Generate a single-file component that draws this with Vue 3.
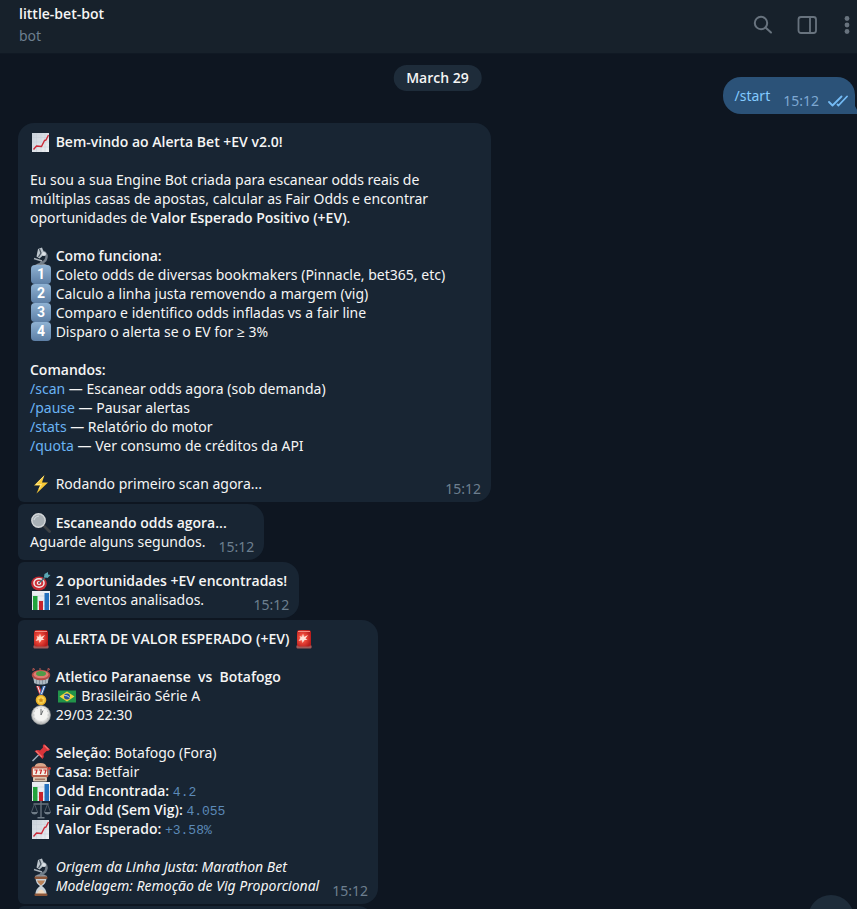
<script setup>
const time = "15:12";

// every line is a list of segments: [kind, value]
const messages = [
    {
        id: 1,
        first: true,
        lines: [
            [["emoji", "chart"], ["bold", " Bem-vindo ao Alerta Bet +EV v2.0!"]],
            [],
            [
                ["text", "Eu sou a sua Engine Bot criada para escanear odds reais de "],
                ["text", "múltiplas casas de apostas, calcular as Fair Odds e encontrar "],
                ["text", "oportunidades de "],
                ["bold", "Valor Esperado Positivo (+EV)"],
                ["text", "."],
            ],
            [],
            [["emoji", "microscope"], ["bold", " Como funciona:"]],
            [["key", "1"], ["text", " Coleto odds de diversas bookmakers (Pinnacle, bet365, etc)"]],
            [["key", "2"], ["text", " Calculo a linha justa removendo a margem (vig)"]],
            [["key", "3"], ["text", " Comparo e identifico odds infladas vs a fair line"]],
            [["key", "4"], ["text", " Disparo o alerta se o EV for ≥ 3%"]],
            [],
            [["bold", "Comandos:"]],
            [["link", "/scan"], ["text", " — Escanear odds agora (sob demanda)"]],
            [["link", "/pause"], ["text", " — Pausar alertas"]],
            [["link", "/stats"], ["text", " — Relatório do motor"]],
            [["link", "/quota"], ["text", " — Ver consumo de créditos da API"]],
            [],
            [["emoji", "bolt"], ["text", " Rodando primeiro scan agora..."]],
        ],
    },
    {
        id: 2,
        lines: [
            [["emoji", "magnifier"], ["bold", " Escaneando odds agora..."]],
            [["text", "Aguarde alguns segundos."]],
        ],
    },
    {
        id: 3,
        lines: [
            [["emoji", "target"], ["bold", " 2 oportunidades +EV encontradas!"]],
            [["emoji", "bars"], ["text", " 21 eventos analisados."]],
        ],
    },
    {
        id: 4,
        lines: [
            [["emoji", "siren"], ["bold", " ALERTA DE VALOR ESPERADO (+EV) "], ["emoji", "siren"]],
            [],
            [["emoji", "stadium"], ["bold", " Atletico Paranaense  vs  Botafogo"]],
            [["emoji", "medal"], ["text", " "], ["emoji", "brazil"], ["text", " Brasileirão Série A"]],
            [["emoji", "clock"], ["text", " 29/03 22:30"]],
            [],
            [["emoji", "pin"], ["bold", " Seleção:"], ["text", " Botafogo (Fora)"]],
            [["emoji", "slot"], ["bold", " Casa:"], ["text", " Betfair"]],
            [["emoji", "bars"], ["bold", " Odd Encontrada:"], ["text", " "], ["code", "4.2"]],
            [["emoji", "scales"], ["bold", " Fair Odd (Sem Vig):"], ["text", " "], ["code", "4.055"]],
            [["emoji", "chart"], ["bold", " Valor Esperado:"], ["text", " "], ["code", "+3.58%"]],
            [],
            [["emoji", "microscope"], ["italic", " Origem da Linha Justa: Marathon Bet"]],
            [["emoji", "hourglass"], ["italic", " Modelagem: Remoção de Vig Proporcional"]],
        ],
    },
];
</script>

<template>
<div class="chat">
    <svg class="sprites" aria-hidden="true">
        <defs>
            <linearGradient id="paper-fill" x1="0" y1="0" x2="1" y2="1">
                <stop offset="0" stop-color="#c9d1da" />
                <stop offset="1" stop-color="#eef0f3" />
            </linearGradient>
            <radialGradient id="siren-fill" cx="0.4" cy="0.5" r="0.6">
                <stop offset="0" stop-color="#ffb9a8" />
                <stop offset="0.4" stop-color="#ee4a3b" />
                <stop offset="1" stop-color="#b91d1c" />
            </radialGradient>
            <radialGradient id="clock-fill" cx="0.5" cy="0.45" r="0.55">
                <stop offset="0.6" stop-color="#f4f4f2" />
                <stop offset="1" stop-color="#a9abab" />
            </radialGradient>
        </defs>
        <symbol id="chart" viewBox="0 0 22 20">
            <rect x="2" y="1" width="17" height="19" fill="url(#paper-fill)" />
            <path d="M2 5.5h17M2 10h17M2 15h17M6.5 1v19M11 1v19M15 1v19" stroke="#c6ced8" stroke-width="0.5" />
            <path d="M3.5 17.5 L6.5 14 L11.5 14.5 L14.5 8.500 L16 8 L18.5 3" fill="none" stroke="#cb2a38" stroke-width="1.4" stroke-linejoin="round" />
        </symbol>
        <symbol id="microscope" viewBox="0 0 22 20">
            <path d="M5 19 Q11 15 17 19 L17 20 H5Z" fill="#8b949d" />
            <path d="M13 5.5 Q18 8 16 13 Q15 16 10 17.5" fill="none" stroke="#727d88" stroke-width="2.4" />
            <path d="M4 12.5 L12 15" stroke="#a8b1b9" stroke-width="1.5" />
            <path d="M8 3 L12 1.5 L14.5 8 L9.5 12.5 L6.5 10.5Z" fill="#bcc5cc" />
            <path d="M9.5 3 L11 7 L8.5 11" fill="none" stroke="#47535f" stroke-width="1.2" />
            <circle cx="14" cy="8" r="2" fill="#dce2e7" />
        </symbol>
        <symbol id="bolt" viewBox="0 0 22 20">
            <path d="M14.5 1 L4 11.5 L10 11.5 L6.5 19.5 L18 8.5 L12 8.5Z" fill="#f8c936" />
            <path d="M13.5 2.5 L6 10.5 H11.5 L9 15" fill="none" stroke="#ffe98b" stroke-width="0.9" />
        </symbol>
        <symbol id="magnifier" viewBox="0 0 22 20">
            <path d="M13.5 12.5 L19.5 18.5" stroke="#3c4145" stroke-width="2.8" stroke-linecap="round" />
            <circle cx="8.5" cy="7.5" r="6.7" fill="#a9b1b6" stroke="#d4d7d9" stroke-width="1.4" />
            <path d="M4 7 Q5 3.5 9 3" fill="none" stroke="#d0d7db" stroke-width="1.2" />
        </symbol>
        <symbol id="target" viewBox="0 0 22 20">
            <ellipse cx="9" cy="12.5" rx="7.8" ry="7" fill="#c42b33" />
            <ellipse cx="9" cy="12" rx="5.8" ry="5" fill="#f0eded" />
            <ellipse cx="9" cy="12" rx="4.3" ry="3.6" fill="#d02f37" />
            <ellipse cx="9" cy="12" rx="2.3" ry="2" fill="#f6eeee" />
            <circle cx="9" cy="12" r="1" fill="#c42b33" />
            <path d="M9 12 L16 5.5" stroke="#3d6f79" stroke-width="1.5" />
            <path d="M14 6 L14.5 3 L18 1 L18 3.5 L20.5 4 L17.5 7Z" fill="#5aa7b5" />
        </symbol>
        <symbol id="bars" viewBox="0 0 22 20">
            <rect x="2" y="1" width="18" height="19" fill="#e9edf2" />
            <path d="M2 6h18M2 11h18M2 16h18" stroke="#c8d0d9" stroke-width="0.6" />
            <rect x="3" y="6" width="4.5" height="14" fill="#22a33c" />
            <rect x="9" y="11" width="4" height="9" fill="#c8232c" />
            <rect x="14.5" y="3" width="4.5" height="17" fill="#2470bd" />
        </symbol>
        <symbol id="siren" viewBox="0 0 22 20">
            <rect x="3.5" y="16" width="15" height="3.5" rx="1.2" fill="#a35a58" />
            <rect x="4" y="1" width="14" height="16.5" rx="2.5" fill="url(#siren-fill)" />
            <path d="M5 2.5h12" stroke="#f18e81" />
            <path d="M10 4.5 L11 8 L15 6 L12.5 9.5 L14.5 11 L11.5 11 L9.5 14 L9 11 L5.500 12 L7.5 9 L6.500 7 L9 8Z" fill="#ffe2d8" />
        </symbol>
        <symbol id="stadium" viewBox="0 0 22 20">
            <path d="M2.5 9 L4.5 16.5 Q11 19 17.5 16.5 L19.5 9Z" fill="#8795a0" />
            <path d="M5 11v5M8 12v5M11 12v5M14 12v5M17 11v5" stroke="#d3dbe0" />
            <ellipse cx="11" cy="8" rx="9.3" ry="5.3" fill="#b34a45" />
            <ellipse cx="11" cy="7.5" rx="7.5" ry="3.8" fill="#e07c72" />
            <ellipse cx="11" cy="6.5" rx="5" ry="2.6" fill="#4f9b48" />
            <path d="M3 4 V1.5 L5 2.5M18 4 V1.5 L20 2.5M10 3 V1" stroke="#c35a53" fill="none" />
        </symbol>
        <symbol id="medal" viewBox="0 0 22 20">
            <path d="M6 0 H9.5 L13 9 H9.5Z" fill="#d13e46" />
            <path d="M7.5 0 L11 9" stroke="#f2f2f2" />
            <path d="M12.5 0 H16 L12.5 9 H9.5Z" fill="#3868b5" />
            <path d="M14.5 0 L11.5 8" stroke="#f2f2f2" />
            <circle cx="11" cy="14" r="5.3" fill="#e9ae25" />
            <circle cx="11" cy="14" r="3.7" fill="#f9d352" />
            <path d="M11 11.5 L11.8 13.3 L13.7 13.5 L12.3 14.7 L12.7 16.5 L11 15.6 L9.3 16.5 L9.7 14.7 L8.3 13.5 L10.2 13.3Z" fill="#cc8a18" />
        </symbol>
        <symbol id="brazil" viewBox="0 0 22 20">
            <rect x="2" y="4.5" width="18" height="12" fill="#22944a" />
            <path d="M11 5.5 L18.5 10.5 L11 15.5 L3.5 10.5Z" fill="#f1d33d" />
            <circle cx="11" cy="10.5" r="3" fill="#29539a" />
            <path d="M8.3 9.5 Q11 9 13.7 11.5" fill="none" stroke="#e9eef5" stroke-width="0.8" />
        </symbol>
        <symbol id="clock" viewBox="0 0 22 20">
            <circle cx="11" cy="10" r="9.5" fill="url(#clock-fill)" stroke="#9c9f9f" stroke-width="0.6" />
            <path d="M11 2v1.5M11 16.5v1.5M3 10h1.5M17.5 10h1.5M7 3l.6 1M15 3l-.6 1M4 6l1 .6M18 6l-1 .6M4 14l1-.6M18 14l-1-.6" stroke="#a9abab" stroke-width="0.6" />
            <path d="M11 10 V4 M11 10 L13 5.5" stroke="#6b6e70" stroke-width="1" />
        </symbol>
        <symbol id="pin" viewBox="0 0 22 20">
            <path d="M2.5 18 L9 11.5" stroke="#9eafbd" stroke-width="1.4" />
            <path d="M4.5 8 Q8 6.5 10 7.5 L13 4.5 Q12 2.5 14 1 L20 6.5 Q18.5 8.5 16.5 8 L13.5 11 Q14.5 13.5 12.5 16Z" fill="#d8343a" />
            <path d="M6 8 L12 14M14.5 2.5 L18.5 6.5" stroke="#f4736e" stroke-width="1.2" />
        </symbol>
        <symbol id="slot" viewBox="0 0 22 20">
            <path d="M4.5 5 Q5 1 10.5 1 Q16 1 16.5 5Z" fill="#d9a68a" />
            <rect x="1.5" y="4.5" width="17" height="11" rx="2" fill="#b9604c" />
            <rect x="3" y="6.5" width="14" height="6.5" fill="#f3eee5" />
            <path d="M4.3 8 H7 L5.8 12M8.8 8 H11.5 L10.3 12M13.3 8 H16 L14.8 12" fill="none" stroke="#c82c2b" stroke-width="1.2" />
            <rect x="3" y="15" width="14" height="4.5" rx="1" fill="#d8c3ae" />
            <path d="M5 17.2 H15" stroke="#8b5948" />
            <path d="M19 13 V7" stroke="#a9afb5" />
            <circle cx="19.5" cy="6.5" r="1.4" fill="#d73b36" />
        </symbol>
        <symbol id="scales" viewBox="0 0 22 20">
            <path d="M11 1 V17 M3.5 4 H18.5" stroke="#67737e" stroke-width="1.4" />
            <path d="M4.5 4 L1.5 12 M4.5 4 L7.5 12 M17.5 4 L14.5 12 M17.5 4 L20.5 12" stroke="#596570" stroke-width="0.8" />
            <path d="M1 12 H8 Q7 14.5 4.5 14.5 Q2 14.5 1 12Z M14 12 H21 Q20 14.5 17.5 14.5 Q15 14.5 14 12Z M7.5 17 H14.5 V18.5 H7.5Z" fill="#6f7c87" />
        </symbol>
        <symbol id="hourglass" viewBox="0 0 22 20">
            <path d="M5.5 2 H16.5 Q16.5 7 12 10 Q16.5 13 16.5 18 H5.5 Q5.5 13 10 10 Q5.5 7 5.5 2Z" fill="#c9d2d8" />
            <path d="M7 4.5 H15 Q14 7.5 11 9.5 Q8 7.5 7 4.5Z" fill="#b98258" />
            <path d="M7 18 Q8 14 11 13.5 Q14 14 15 18Z" fill="#f0d9bf" />
            <rect x="4.5" y="0.5" width="13" height="2.5" rx="1" fill="#8c5638" />
            <rect x="4.5" y="17.5" width="13" height="2.5" rx="1" fill="#8c5638" />
        </symbol>
    </svg>

    <header class="chat-header">
        <div class="chat-peer">
            <h1 class="chat-title">little-bet-bot</h1>
            <p class="chat-status">bot</p>
        </div>
        <div class="chat-actions">
            <button class="icon-button" type="button" aria-label="Search">
                <svg width="20" height="20" viewBox="0 0 20 20" fill="none" stroke="currentColor" stroke-width="2" stroke-linecap="round">
                    <circle cx="8" cy="8" r="6.2" />
                    <path d="M12.5 12.5 L18 17.5" />
                </svg>
            </button>
            <button class="icon-button" type="button" aria-label="Toggle side panel">
                <svg width="20" height="20" viewBox="0 0 20 20" fill="none" stroke="currentColor" stroke-width="1.8">
                    <rect x="1.5" y="2" width="17.5" height="16" rx="2.5" />
                    <path d="M13 2 V18" />
                </svg>
            </button>
            <button class="icon-button" type="button" aria-label="More">
                <svg width="12" height="20" viewBox="0 0 12 20" fill="currentColor">
                    <circle cx="6" cy="3.5" r="2.4" />
                    <circle cx="6" cy="10" r="2.4" />
                    <circle cx="6" cy="16.5" r="2.4" />
                </svg>
            </button>
        </div>
    </header>

    <main class="history">
        <div class="date-pill">March 29</div>

        <div class="bubble bubble-out">
            <div class="line line-last">
                <a class="command" href="#start">/start</a>
                <span class="meta">
                    <time>{{ time }}</time>
                    <svg class="ticks" width="20" height="12" viewBox="0 0 20 12" fill="none" stroke="#74bbf5" stroke-width="1.8" stroke-linecap="round" stroke-linejoin="round">
                        <path d="M1 7 L4.5 10.5 L13.5 1.5" />
                        <path d="M9.5 9.5 L10.5 10.5 L19 1.5" />
                    </svg>
                </span>
            </div>
            <svg class="tail" width="8" height="12" viewBox="0 0 8 12">
                <path d="M0 0 Q1 8 8 12 H0Z" fill="#2b5278" />
            </svg>
        </div>

        <div v-for="message in messages" :key="message.id" class="bubble" :class="{ 'bubble-first': message.first }">
            <div v-for="(line, i) in message.lines" :key="i" class="line" :class="{ 'line-last': i === message.lines.length - 1 }">
                <span>
                    <template v-for="(part, j) in line" :key="j">
                        <svg v-if="part[0] === 'emoji'" class="emoji"><use :href="'#' + part[1]" /></svg>
                        <span v-else-if="part[0] === 'key'" class="keycap">{{ part[1] }}</span>
                        <strong v-else-if="part[0] === 'bold'">{{ part[1] }}</strong>
                        <em v-else-if="part[0] === 'italic'">{{ part[1] }}</em>
                        <code v-else-if="part[0] === 'code'">{{ part[1] }}</code>
                        <a v-else-if="part[0] === 'link'" class="command" :href="'#' + part[1].slice(1)">{{ part[1] }}</a>
                        <span v-else>{{ part[1] }}</span>
                    </template>
                </span>
                <span v-if="i === message.lines.length - 1" class="meta"><time>{{ time }}</time></span>
            </div>
        </div>
        <div class="bubble bubble-next"></div>

        <button class="scroll-down" type="button" aria-label="Scroll to bottom"></button>
    </main>
</div>
</template>

<style>
body {
    background: #0e1621;
}
</style>

<style scoped>
.chat {
    display: flex;
    flex-direction: column;
    height: 100vh;
    overflow: hidden;
    background: #0e1621;
    color: #f5f5f5;
    font-family: "Noto Sans", "Open Sans", sans-serif;
    font-size: 14px;
    line-height: 19px;
}

.sprites {
    position: absolute;
    width: 0;
    height: 0;
}

.chat-header {
    display: flex;
    flex: none;
    justify-content: space-between;
    box-sizing: border-box;
    height: 54px;
    padding: 3px 4px 0 19px;
    background: #17212b;
    border-bottom: 1px solid #101924;
}

.chat-title,
.chat-status {
    margin: 0;
    font-size: 14px;
    line-height: 22px;
}

.chat-title,
.date-pill,
strong {
    font-family: "Open Sans", sans-serif;
    font-weight: 600;
}

.chat-status {
    color: #6d7f8f;
}

.chat-actions {
    display: flex;
    align-items: center;
    gap: 24px;
    height: 44px;
}

.icon-button {
    display: flex;
    padding: 0;
    border: 0;
    background: none;
    color: #68737e;
    cursor: pointer;
}

.history {
    position: relative;
    display: flex;
    flex: 1;
    flex-direction: column;
    align-items: flex-start;
    gap: 2px;
    min-height: 0;
    margin-left: 18px;
    padding: 23px 2px 0 0;
    overflow: hidden;
}

.date-pill {
    position: absolute;
    top: 11px;
    left: 50%;
    padding: 0 13px;
    border-radius: 13px;
    background: #1e2c3a;
    line-height: 26px;
    transform: translateX(-50%);
}

.bubble {
    position: relative;
    flex: none;
    box-sizing: border-box;
    max-width: 473px;
    padding: 9px 12px;
    border-radius: 6px 16px 16px 6px;
    background: #182533;
}

.bubble-first {
    border-top-left-radius: 16px;
}

.bubble-next {
    width: 356px;
    height: 56px;
}

.bubble-out {
    align-self: flex-end;
    margin-bottom: 7px;
    padding-right: 9px;
    border-radius: 18px 18px 0 18px;
    background: #2b5278;
}

.tail {
    position: absolute;
    right: -7px;
    bottom: 0;
}

.line {
    min-height: 19px;
    white-space: pre-wrap;
}

.line-last {
    display: flex;
    justify-content: space-between;
}

.meta {
    display: flex;
    flex: none;
    align-items: center;
    gap: 9px;
    margin: 5px -2px -5px 13px;
    color: #6d7f8f;
}

.bubble-out .meta {
    color: #7da8d3;
}

code {
    color: #5c8ab8;
    font-family: "Liberation Mono", monospace;
    font-size: 13px;
    line-height: 1;
}

.command {
    color: #6ab3f3;
    text-decoration: none;
}

.bubble-out .command {
    color: #83caff;
}

.emoji {
    display: inline-block;
    width: 22px;
    height: 20px;
    margin-bottom: -1px;
    vertical-align: -4px;
}

.keycap {
    display: inline-block;
    box-sizing: border-box;
    width: 20px;
    height: 19px;
    margin: 0 1px;
    border-radius: 4px;
    background: linear-gradient(#8fb2d3, #5d7fa5);
    color: #ffffff;
    font-family: Roboto, sans-serif;
    font-weight: 700;
    text-align: center;
    vertical-align: bottom;
}

.scroll-down {
    position: absolute;
    right: 3px;
    bottom: -32px;
    width: 46px;
    height: 46px;
    padding: 0;
    border: 0;
    border-radius: 50%;
    background: #1e2c3a;
}
</style>
